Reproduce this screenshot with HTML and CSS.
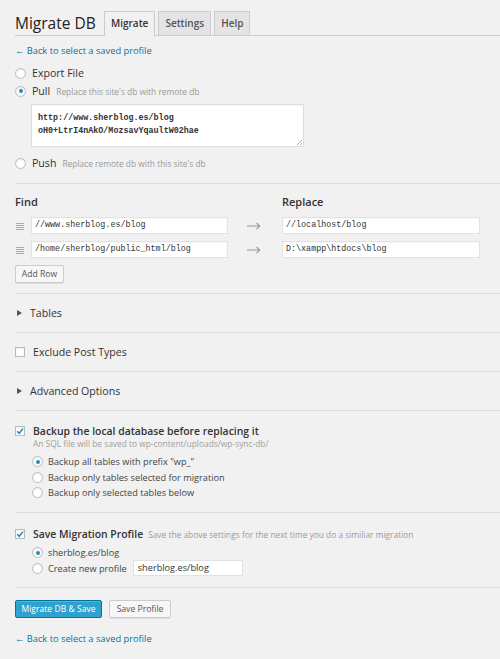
FILE: index.html
```html
<!DOCTYPE html>
<html>
<head>
<meta charset="utf-8">
<link rel="stylesheet" href="styles.css">
</head>
<body>
<div class="wrap">
  <div class="hdr">
    <h1 class="title">Migrate DB</h1>
    <div class="tabs">
      <span class="tab active">Migrate</span>
      <span class="tab">Settings</span>
      <span class="tab">Help</span>
    </div>
  </div>

  <section class="sec sec-action">
    <a class="back" href="#">← Back to select a saved profile</a>
    <div class="opts">
      <label class="opt"><span class="radio"></span><span class="lbl">Export File</span></label>
      <label class="opt"><span class="radio on"></span><span class="lbl">Pull</span><span class="note">Replace this site's db with remote db</span></label>
      <div class="conn">
        <div class="ta">http://www.sherblog.es/blog<br>oH0+LtrI4nAkO/MozsavYqaultW02hae</div>
        <svg class="grip" width="6" height="6" viewBox="0 0 6 6"><path d="M6 1L1 6M6 4L4 6" stroke="#999" stroke-width="0.8"/></svg>
      </div>
      <label class="opt push"><span class="radio"></span><span class="lbl">Push</span><span class="note">Replace remote db with this site's db</span></label>
    </div>
  </section>

  <section class="sec sec-fr">
    <div class="fr">
      <div class="frh find-h">Find</div>
      <div class="frh rep-h">Replace</div>

      <span class="handle"><i></i><i></i><i></i><i></i></span>
      <div class="inp mono">//www.sherblog.es/blog</div>
      <span class="arrow"><svg width="14" height="8" viewBox="0 0 14 8"><path d="M0 4H12.5M9.5 1L12.8 4L9.5 7" fill="none" stroke="#9a9a9a" stroke-width="1.1"/></svg></span>
      <div class="inp mono">//localhost/blog</div>

      <span class="handle"><i></i><i></i><i></i><i></i></span>
      <div class="inp mono">/home/sherblog/public_html/blog</div>
      <span class="arrow"><svg width="14" height="8" viewBox="0 0 14 8"><path d="M0 4H12.5M9.5 1L12.8 4L9.5 7" fill="none" stroke="#9a9a9a" stroke-width="1.1"/></svg></span>
      <div class="inp mono">D:\xampp\htdocs\blog</div>
    </div>
    <button class="btn add">Add Row</button>
  </section>

  <section class="sec sec-toggle">
    <svg class="tri" width="5" height="6" viewBox="0 0 5 6"><path d="M0 0L5 3L0 6Z" fill="#555"/></svg>
    <span class="lbl">Tables</span>
  </section>

  <section class="sec sec-toggle sec-exclude">
    <span class="check"></span>
    <span class="lbl">Exclude Post Types</span>
  </section>

  <section class="sec sec-toggle">
    <svg class="tri" width="5" height="6" viewBox="0 0 5 6"><path d="M0 0L5 3L0 6Z" fill="#555"/></svg>
    <span class="lbl">Advanced Options</span>
  </section>

  <section class="sec sec-backup">
    <div class="chkrow">
      <span class="check on"><svg width="10" height="10" viewBox="0 0 10 10"><path d="M2.2 5.2L4.2 7.3L8 2.6" fill="none" stroke="#1e8cbe" stroke-width="1.5"/></svg></span>
      <span class="lbl strong">Backup the local database before replacing it</span>
    </div>
    <div class="sub">An SQL file will be saved to wp-content/uploads/wp-sync-db/</div>
    <div class="subopts">
      <label class="sopt"><span class="radio on"></span><span class="slbl">Backup all tables with prefix "wp_"</span></label>
      <label class="sopt"><span class="radio"></span><span class="slbl">Backup only tables selected for migration</span></label>
      <label class="sopt"><span class="radio"></span><span class="slbl">Backup only selected tables below</span></label>
    </div>
  </section>

  <section class="sec sec-save">
    <div class="chkrow">
      <span class="check on"><svg width="10" height="10" viewBox="0 0 10 10"><path d="M2.2 5.2L4.2 7.3L8 2.6" fill="none" stroke="#1e8cbe" stroke-width="1.5"/></svg></span>
      <span class="lbl strong">Save Migration Profile</span>
      <span class="note">Save the above settings for the next time you do a similiar migration</span>
    </div>
    <div class="subopts">
      <label class="sopt"><span class="radio on"></span><span class="slbl">sherblog.es/blog</span></label>
      <label class="sopt"><span class="radio"></span><span class="slbl">Create new profile</span><span class="pinp">sherblog.es/blog</span></label>
    </div>
  </section>

  <section class="sec sec-actions">
    <div class="btns">
      <button class="btn primary">Migrate DB &amp; Save</button>
      <button class="btn sec-btn">Save Profile</button>
    </div>
    <a class="back" href="#">← Back to select a saved profile</a>
  </section>
</div>
</body>
</html>
```

FILE: styles.css
```css
* { box-sizing: border-box; }
html, body { margin: 0; padding: 0; background: #f1f1f1; }
body {
  font-family: "Open Sans", "Noto Sans", sans-serif;
  color: #444;
  font-size: 11px;
  width: 500px;
  height: 659px;
  overflow: hidden;
}
.wrap { padding-left: 15px; }

/* header */
.hdr {
  display: flex;
  align-items: flex-end;
  height: 36px;
  border-bottom: 1px solid #ccc;
}
.title {
  margin: 0;
  width: 89px;
  flex: none;
  font-size: 15.5px;
  font-weight: 400;
  color: #222;
  line-height: 24px;
  white-space: nowrap;
}
.tabs { display: flex; gap: 3px; }
.tab {
  height: 24px;
  line-height: 23px;
  padding: 0 6px;
  border: 1px solid #ccc;
  border-bottom: none;
  background: #e4e4e4;
  font-size: 10px;
  font-weight: 600;
  color: #555;
}
.tab.active {
  background: #f1f1f1;
  color: #333;
  height: 25px;
  margin-bottom: -1px;
}

/* sections */
.sec { border-top: 1px solid #dcdcdc; }
.sec-action { border-top: none; padding: 7px 0 11px; }
.back {
  display: block;
  color: #0074a2;
  text-decoration: none;
  font-size: 9.3px;
  line-height: 16px;
}
.opts { margin-top: 5px; }
.opt {
  display: flex;
  align-items: center;
  height: 18px;
}
.lbl { font-size: 10.6px; color: #333; line-height: 16px; }
.lbl.strong { font-weight: 600; font-size: 10.4px; }
.note {
  font-size: 8.4px;
  color: #9a9a9a;
  margin-left: 6px;
  padding-top: 1px;
}
.radio {
  display: inline-block;
  width: 11px;
  height: 11px;
  border: 1px solid #bbb;
  border-radius: 50%;
  background: #fff;
  margin-right: 6px;
  flex: none;
  position: relative;
  box-shadow: inset 0 1px 2px rgba(0,0,0,.08);
}
.radio.on::after {
  content: "";
  position: absolute;
  left: 2.5px;
  top: 2.5px;
  width: 4px;
  height: 4px;
  border-radius: 50%;
  background: #1e8cbe;
}
.conn {
  position: relative;
  margin: 4px 0 7px 16px;
  width: 273px;
  height: 43px;
  background: #fff;
  border: 1px solid #ddd;
  box-shadow: inset 0 1px 2px rgba(0,0,0,.05);
}
.ta {
  font-family: "Liberation Mono", "DejaVu Sans Mono", monospace;
  font-size: 8.4px;
  font-weight: 700;
  color: #333;
  line-height: 13px;
  padding: 7px 0 0 6px;
}
.grip { position: absolute; right: 1px; bottom: 1px; }

/* find replace */
.sec-fr { padding: 10px 0 10px; }
.fr {
  display: grid;
  grid-template-columns: 16px 197px 54px 198px;
  grid-template-rows: 16px 17px 17px;
  row-gap: 7px;
  align-items: center;
}
.frh { font-size: 11px; font-weight: 600; color: #333; line-height: 16px; }
.find-h { grid-column: 1 / 3; }
.rep-h { grid-column: 4; }
.handle { display: flex; flex-direction: column; gap: 1px; width: 8px; margin-left: 1px; margin-top: 1px; }
.handle i { display: block; height: 1px; background: #aaa; }
.inp {
  height: 17px;
  background: #fff;
  border: 1px solid #e2e2e2;
  box-shadow: inset 0 1px 2px rgba(0,0,0,.04);
  line-height: 15px;
  padding-left: 3px;
  color: #333;
}
.mono { font-family: "Liberation Mono", "DejaVu Sans Mono", monospace; font-size: 8.4px; }
.arrow { display: flex; padding-left: 19px; }

.btn {
  font-family: "Open Sans", sans-serif;
  display: inline-block;
  height: 18px;
  border: 1px solid #ccc;
  background: #f7f7f7;
  color: #555;
  font-size: 8.6px;
  padding: 0 5px;
  line-height: 16px;
  border-radius: 2px;
  box-shadow: 0 1px 0 #ddd;
  margin: 0;
}
.add { margin-top: 7px; width: 49px; padding: 0; }

/* toggles */
.sec-toggle {
  height: 39px;
  display: flex;
  align-items: center;
}
.tri { margin-left: 2px; margin-right: 8px; }
.check {
  display: inline-block;
  width: 10px;
  height: 10px;
  border: 1px solid #bbb;
  background: #fff;
  margin-right: 8px;
  flex: none;
  position: relative;
  box-shadow: inset 0 1px 2px rgba(0,0,0,.08);
}
.check svg { position: absolute; left: -1px; top: -1px; }

/* backup */
.sec-backup { padding-top: 11px; height: 102px; }
.chkrow { display: flex; align-items: center; height: 17px; }
.sub {
  font-size: 8.4px;
  color: #a0a0a0;
  margin-left: 18px;
  line-height: 10px;
}
.subopts { margin-left: 17px; margin-top: 5px; }
.sopt { display: flex; align-items: center; height: 15.5px; }
.slbl { font-size: 9.2px; color: #444; }
.sopt .radio { margin-right: 5px; }

/* save */
.sec-save { padding-top: 12px; height: 75px; }
.sec-save .subopts { margin-top: 3px; }
.sec-save .note { margin-left: 5px; }
.pinp {
  display: inline-block;
  margin-left: 6px;
  width: 110px;
  height: 16px;
  background: #fff;
  border: 1px solid #e2e2e2;
  font-size: 9.2px;
  line-height: 14px;
  padding-left: 4px;
  color: #333;
}

/* actions */
.sec-actions { padding-top: 12px; }
.btns { display: flex; gap: 7px; }
.primary {
  background: #2ea2cc;
  border-color: #0074a2;
  color: #fff;
  width: 87px;
  padding: 0;
  box-shadow: inset 0 1px 0 rgba(120,200,230,.5);
}
.sec-btn { width: 62px; padding: 0; }
.sec-actions .back { margin-top: 13px; }
```
